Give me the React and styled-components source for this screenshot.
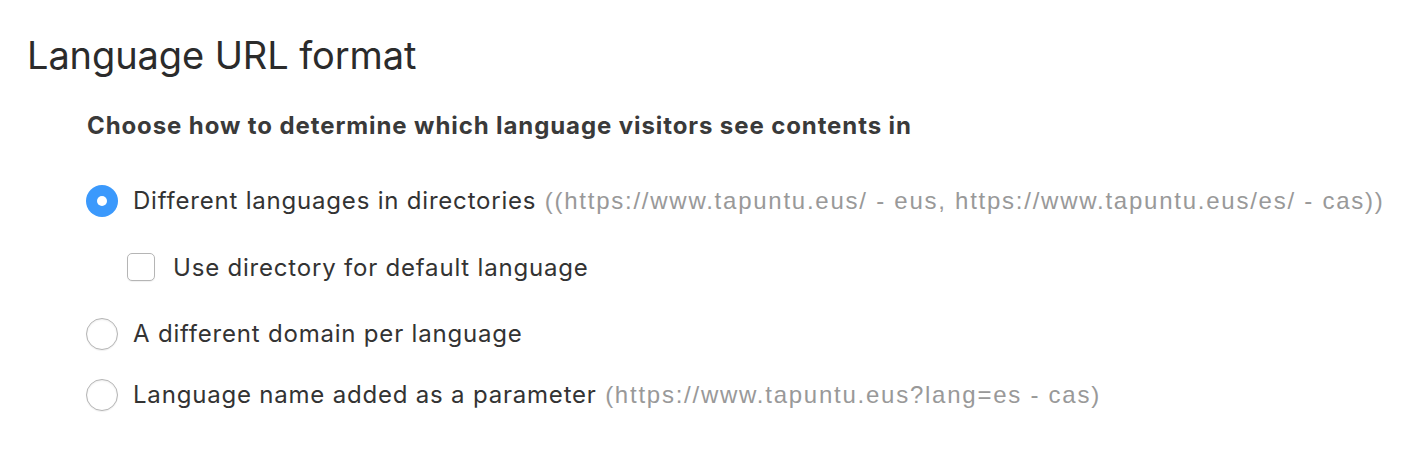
import React, { useState } from "react";
import styled, { createGlobalStyle } from "styled-components";

const GlobalStyle = createGlobalStyle`
  body {
    margin: 0;
    background: #ffffff;
    font-family: Inter, "Noto Sans", sans-serif;
    color: #333333;
  }
`;

const options = [
  {
    id: "dir",
    label: "Different languages in directories",
    hint: "((https://www.tapuntu.eus/ - eus, https://www.tapuntu.eus/es/ - cas))",
  },
  { id: "domain", label: "A different domain per language" },
  {
    id: "param",
    label: "Language name added as a parameter",
    hint: "(https://www.tapuntu.eus?lang=es - cas)",
  },
];

function App() {
  const [format, setFormat] = useState("dir");
  const [useDir, setUseDir] = useState(false);

  return (
    <Page>
      <GlobalStyle />
      <Title>Language URL format</Title>
      <Section>
        <Legend>Choose how to determine which language visitors see contents in</Legend>
        <Options>
          {options.map((opt) => (
            <React.Fragment key={opt.id}>
              <Row onClick={() => setFormat(opt.id)}>
                <Radio checked={format === opt.id} />
                <Label>
                  {opt.label}
                  {opt.hint && <Hint> {opt.hint}</Hint>}
                </Label>
              </Row>
              {opt.id === "dir" && (
                <SubRow onClick={() => setUseDir(!useDir)}>
                  <Checkbox checked={useDir} />
                  <Label>Use directory for default language</Label>
                </SubRow>
              )}
            </React.Fragment>
          ))}
        </Options>
      </Section>
    </Page>
  );
}

export default App;

const Page = styled.div`
  padding: 30px 0 0 27px;
`;

const Title = styled.h1`
  margin: 0;
  font-size: 38px;
  font-weight: 400;
  line-height: 50px;
  color: #2b2b2b;
  letter-spacing: -0.1px;
`;

const Section = styled.div`
  padding-left: 60px;
`;

const Legend = styled.div`
  margin-top: 31px;
  font-size: 24px;
  font-weight: 700;
  line-height: 30px;
  letter-spacing: 0.9px;
  color: #3a3a3a;
`;

const Options = styled.div`
  display: flex;
  flex-direction: column;
  margin-top: 29px;
`;

const Row = styled.label`
  display: flex;
  align-items: center;
  gap: 15px;
  height: 61px;
  cursor: pointer;
  margin-left: -1px;
`;

const SubRow = styled(Row)`
  padding-left: 41px;
  gap: 18px;
  height: 72px;
`;

const Radio = styled.span`
  width: 32px;
  height: 32px;
  box-sizing: border-box;
  border-radius: 50%;
  flex-shrink: 0;
  background: ${(p) => (p.checked ? "#3b99fc" : "#ffffff")};
  border: ${(p) => (p.checked ? "none" : "1px solid #b5b5b5")};
  box-shadow: ${(p) =>
    p.checked ? "none" : "inset 0 1px 2px rgba(0,0,0,0.08), 0 1px 1px rgba(0,0,0,0.06)"};
  position: relative;

  &::after {
    content: "";
    display: ${(p) => (p.checked ? "block" : "none")};
    position: absolute;
    left: 11px;
    top: 11px;
    width: 10px;
    height: 10px;
    border-radius: 50%;
    background: #ffffff;
  }
`;

const Checkbox = styled.span`
  width: 28px;
  height: 28px;
  box-sizing: border-box;
  border-radius: 5px;
  flex-shrink: 0;
  border: 1px solid #b5b5b5;
  background: ${(p) => (p.checked ? "#3b99fc" : "#ffffff")};
  box-shadow: 0 1px 1px rgba(0, 0, 0, 0.06);
`;

const Label = styled.span`
  font-size: 24px;
  letter-spacing: 0.8px;
  color: #333333;
  white-space: nowrap;
`;

const Hint = styled.span`
  font-family: "Liberation Sans", Arial, sans-serif;
  font-size: 24px;
  letter-spacing: 1.75px;
  color: #999999;
`;
